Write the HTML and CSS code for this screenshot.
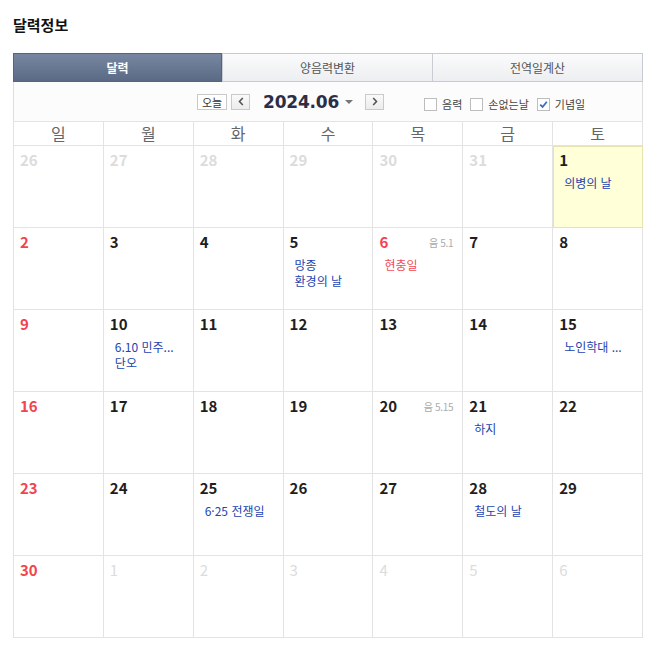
FILE: index.html
```html
<!DOCTYPE html>
<html lang="ko">
<head>
<meta charset="utf-8">
<title>달력정보</title>
<link rel="stylesheet" href="styles.css">
</head>
<body>
<div class="wrap">
  <h1 class="title">달력정보</h1>
  <div class="cal">
    <div class="tabs">
      <div class="tab active">달력</div>
      <div class="tab">양음력변환</div>
      <div class="tab">전역일계산</div>
    </div>
    <div class="controls">
      <div class="nav">
        <button class="today">오늘</button>
        <button class="arrow" aria-label="이전달"><svg width="6" height="9" viewBox="0 0 6 9"><path d="M4.8 1 L1.5 4.5 L4.8 8" fill="none" stroke="#555" stroke-width="1.6"/></svg></button>
        <span class="ym">2024.06</span>
        <svg class="caret" width="8" height="4" viewBox="0 0 8 4"><path d="M0 0 H8 L4 4 Z" fill="#777"/></svg>
        <button class="arrow next" aria-label="다음달"><svg width="6" height="9" viewBox="0 0 6 9"><path d="M1.2 1 L4.5 4.5 L1.2 8" fill="none" stroke="#555" stroke-width="1.6"/></svg></button>
      </div>
      <div class="opts">
        <label class="opt"><span class="box"></span>음력</label>
        <label class="opt"><span class="box"></span>손없는날</label>
        <label class="opt"><span class="box"><svg width="11" height="11" viewBox="0 0 11 11"><path d="M2.2 5.6 L4.6 8 L8.8 2.8" fill="none" stroke="#3570b8" stroke-width="1.8"/></svg></span>기념일</label>
      </div>
    </div>
    <div class="grid">
      <div class="dow">일</div><div class="dow">월</div><div class="dow">화</div><div class="dow">수</div><div class="dow">목</div><div class="dow">금</div><div class="dow">토</div>

      <div class="day"><div class="top"><span class="num other">26</span></div></div>
      <div class="day"><div class="top"><span class="num other">27</span></div></div>
      <div class="day"><div class="top"><span class="num other">28</span></div></div>
      <div class="day"><div class="top"><span class="num other">29</span></div></div>
      <div class="day"><div class="top"><span class="num other">30</span></div></div>
      <div class="day"><div class="top"><span class="num other">31</span></div></div>
      <div class="day is-today"><div class="top"><span class="num">1</span></div><div class="events"><div class="ev">의병의 날</div></div></div>

      <div class="day"><div class="top"><span class="num sun">2</span></div></div>
      <div class="day"><div class="top"><span class="num">3</span></div></div>
      <div class="day"><div class="top"><span class="num">4</span></div></div>
      <div class="day"><div class="top"><span class="num">5</span></div><div class="events"><div class="ev">망종</div><div class="ev">환경의 날</div></div></div>
      <div class="day"><div class="top"><span class="num sun">6</span><span class="lunar">음 5.1</span></div><div class="events"><div class="ev holiday">현충일</div></div></div>
      <div class="day"><div class="top"><span class="num">7</span></div></div>
      <div class="day"><div class="top"><span class="num">8</span></div></div>

      <div class="day"><div class="top"><span class="num sun">9</span></div></div>
      <div class="day"><div class="top"><span class="num">10</span></div><div class="events"><div class="ev">6.10 민주...</div><div class="ev">단오</div></div></div>
      <div class="day"><div class="top"><span class="num">11</span></div></div>
      <div class="day"><div class="top"><span class="num">12</span></div></div>
      <div class="day"><div class="top"><span class="num">13</span></div></div>
      <div class="day"><div class="top"><span class="num">14</span></div></div>
      <div class="day"><div class="top"><span class="num">15</span></div><div class="events"><div class="ev">노인학대 ...</div></div></div>

      <div class="day"><div class="top"><span class="num sun">16</span></div></div>
      <div class="day"><div class="top"><span class="num">17</span></div></div>
      <div class="day"><div class="top"><span class="num">18</span></div></div>
      <div class="day"><div class="top"><span class="num">19</span></div></div>
      <div class="day"><div class="top"><span class="num">20</span><span class="lunar">음 5.15</span></div></div>
      <div class="day"><div class="top"><span class="num">21</span></div><div class="events"><div class="ev">하지</div></div></div>
      <div class="day"><div class="top"><span class="num">22</span></div></div>

      <div class="day"><div class="top"><span class="num sun">23</span></div></div>
      <div class="day"><div class="top"><span class="num">24</span></div></div>
      <div class="day"><div class="top"><span class="num">25</span></div><div class="events"><div class="ev">6·25 전쟁일</div></div></div>
      <div class="day"><div class="top"><span class="num">26</span></div></div>
      <div class="day"><div class="top"><span class="num">27</span></div></div>
      <div class="day"><div class="top"><span class="num">28</span></div><div class="events"><div class="ev">철도의 날</div></div></div>
      <div class="day"><div class="top"><span class="num">29</span></div></div>

      <div class="day"><div class="top"><span class="num sun">30</span></div></div>
      <div class="day"><div class="top"><span class="num next-m">1</span></div></div>
      <div class="day"><div class="top"><span class="num next-m">2</span></div></div>
      <div class="day"><div class="top"><span class="num next-m">3</span></div></div>
      <div class="day"><div class="top"><span class="num next-m">4</span></div></div>
      <div class="day"><div class="top"><span class="num next-m">5</span></div></div>
      <div class="day"><div class="top"><span class="num next-m">6</span></div></div>
    </div>
  </div>
</div>
</body>
</html>
```

FILE: styles.css
```css
* { box-sizing: border-box; }
html, body { margin: 0; padding: 0; background: #fff; }
body {
  font-family: "Noto Sans CJK KR", "Noto Sans", sans-serif;
  color: #222;
}
.wrap { padding: 14px 0 0 13px; }
.title {
  margin: 0 0 17px;
  font-size: 15px;
  line-height: 22px;
  font-weight: bold;
  color: #111;
}
.cal { width: 630px; }

.tabs {
  display: flex;
  height: 29px;
  border: 1px solid #c6cad1;
  background: linear-gradient(#fbfbfc, #eceef1);
}
.tab {
  flex: 1 1 0;
  display: flex;
  align-items: center;
  justify-content: center;
  font-size: 12px;
  color: #555;
  border-left: 1px solid #c9cdd3;
}
.tab:first-child { border-left: 0; }
.tab.active {
  flex: 0 0 209px;
  margin: -1px 0 -1px -1px;
  background: linear-gradient(#7787a1, #5a6a85);
  border: 1px solid #56657e;
  color: #fff;
  font-weight: bold;
}

.controls {
  height: 39px;
  display: flex;
  align-items: center;
  padding-left: 183px;
  border-left: 1px solid #dedede;
  border-right: 1px solid #dedede;
  background: #fcfcfc;
}
.nav { display: flex; align-items: center; }
.today {
  width: 30px;
  height: 16px;
  padding: 0;
  border: 1px solid #c9c9c9;
  background: #fff;
  font-family: inherit;
  font-size: 11px;
  line-height: 14px;
  color: #333;
}
.arrow {
  width: 19px;
  height: 16px;
  margin-left: 4px;
  padding: 0;
  border: 1px solid #cacaca;
  background: linear-gradient(#fafafa, #ececec);
  display: flex;
  align-items: center;
  justify-content: center;
}
.arrow.next { margin-left: 12px; }
.ym {
  margin-left: 13px;
  font-family: "DejaVu Sans", sans-serif;
  font-weight: bold;
  font-size: 17px;
  letter-spacing: -0.2px;
  color: #2c2e48;
  line-height: 20px;
}
.caret { margin-left: 6px; }

.opts {
  display: flex;
  align-items: center;
  margin-left: 40px;
  padding-top: 5px;
}
.opt {
  display: flex;
  align-items: center;
  font-size: 11px;
  color: #444;
  margin-right: 8px;
}
.box {
  width: 13px;
  height: 13px;
  border: 1px solid #bdbdbd;
  background: #fff;
  margin-right: 5px;
  display: flex;
  align-items: center;
  justify-content: center;
}

.grid {
  display: grid;
  grid-template-columns: repeat(7, 1fr);
  border-left: 1px solid #e3e3e3;
  border-top: 1px solid #e3e3e3;
}
.dow {
  height: 24px;
  border-right: 1px solid #e3e3e3;
  border-bottom: 1px solid #e3e3e3;
  text-align: center;
  font-size: 16px;
  line-height: 22px;
  color: #666;
}
.day {
  height: 82px;
  border-right: 1px solid #e3e3e3;
  border-bottom: 1px solid #e3e3e3;
  padding: 5px 9px 0 6px;
}
.day.is-today {
  background: #ffffd8;
  border-right-color: #e6e2b2;
  border-bottom-color: #e6e2b2;
  box-shadow: inset 1px 1px 0 #e6e2b2;
}
.top {
  display: flex;
  align-items: center;
  justify-content: space-between;
  height: 18px;
}
.num {
  font-size: 15px;
  line-height: 18px;
  font-weight: bold;
  color: #1e1e1e;
}
.num.sun { color: #f2434f; }
.num.other { color: #dcdcdc; }
.num.next-m { color: #dcdcdc; font-weight: normal; }
.lunar {
  font-size: 10px;
  color: #aaa;
  letter-spacing: -0.3px;
}
.events { margin-top: 6px; padding-left: 5px; }
.ev {
  font-size: 12px;
  line-height: 16px;
  color: #2243b0;
  white-space: nowrap;
}
.ev.holiday { color: #f24c57; }
```
